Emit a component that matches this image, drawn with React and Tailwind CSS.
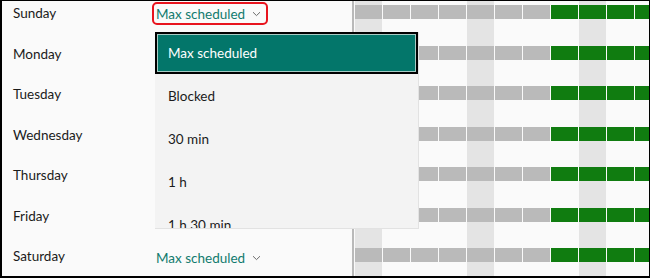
const days = ['Sunday', 'Monday', 'Tuesday', 'Wednesday', 'Thursday', 'Friday', 'Saturday']
const cols = [0, 0, 0, 0, 0, 0, 0, 1, 1, 1, 1]
const options = ['Max scheduled', 'Blocked', '30 min', '1 h', '1 h 30 min']

function Chevron() {
  return (
    <svg width="9" height="6" viewBox="0 0 9 6" className="ml-[7px] mr-[3px] mt-[1px]">
      <path d="M1 1.2 L4.5 4.6 L8 1.2" fill="none" stroke="#6b6b6b" strokeWidth="1" />
    </svg>
  )
}

export default function App() {
  return (
    <div
      className="relative w-[650px] h-[278px] overflow-hidden bg-[#fafafa] border-black border-t border-r border-l-2 border-b-2 flex"
      style={{ fontFamily: 'Lato, "Noto Sans", sans-serif' }}
    >
      <div className="w-[350px] shrink-0 flex flex-col">
        {days.map((d, i) => (
          <div key={d} className="h-[40.5px] shrink-0 flex items-start pt-[2px]">
            <span className="w-[150px] pl-[11px] text-[13.5px] leading-[20px] text-[#1b1b1b]">{d}</span>
            {(i === 0 || i === 6) && (
              <div className={`flex items-center h-[23px] px-[2px] rounded-[5px] ${i === 0 ? 'border-2 border-[#e8141e] -mt-[1px]' : 'border-2 border-transparent'}`}>
                <span className="text-[13.5px] leading-[20px] text-[#117a6e]">Max scheduled</span>
                <Chevron />
              </div>
            )}
          </div>
        ))}
      </div>

      <div className="relative flex-1 border-l-2 border-[#b9b9b9] overflow-hidden">
        <div className="absolute inset-0 flex gap-[1px] pl-[1px]">
          {cols.map((_, c) => (
            <div key={c} className={`w-[27px] shrink-0 h-full ${c % 4 === 0 ? 'bg-[#e4e4e4]' : ''}`} />
          ))}
        </div>
        <div className="relative flex flex-col">
          {days.map(d => (
            <div key={d} className="h-[40.5px] shrink-0 pt-[4px]">
              <div className="flex gap-[1px] pl-[1px]">
                {cols.map((g, c) => (
                  <div key={c} className={`w-[27px] h-[14px] shrink-0 ${g ? 'bg-[#107c10]' : 'bg-[#bababa]'}`} />
                ))}
              </div>
            </div>
          ))}
        </div>
      </div>

      <div className="absolute left-[153px] top-[31px] w-[264px] h-[197px] overflow-hidden bg-[#f3f3f3] border-r border-b border-[#e2e2e2] flex flex-col">
        {options.map((o, i) => (
          <div
            key={o}
            className={`shrink-0 flex items-center text-[13.5px] ${i === 0 ? 'h-[42px] pl-[11px] bg-[#03766a] text-white border-2 border-black outline outline-1 -outline-offset-3 outline-[#a7cbc4]' : 'h-[43.3px] pl-[13px] text-[#1b1b1b]'}`}
          >
            {o}
          </div>
        ))}
      </div>
    </div>
  )
}
